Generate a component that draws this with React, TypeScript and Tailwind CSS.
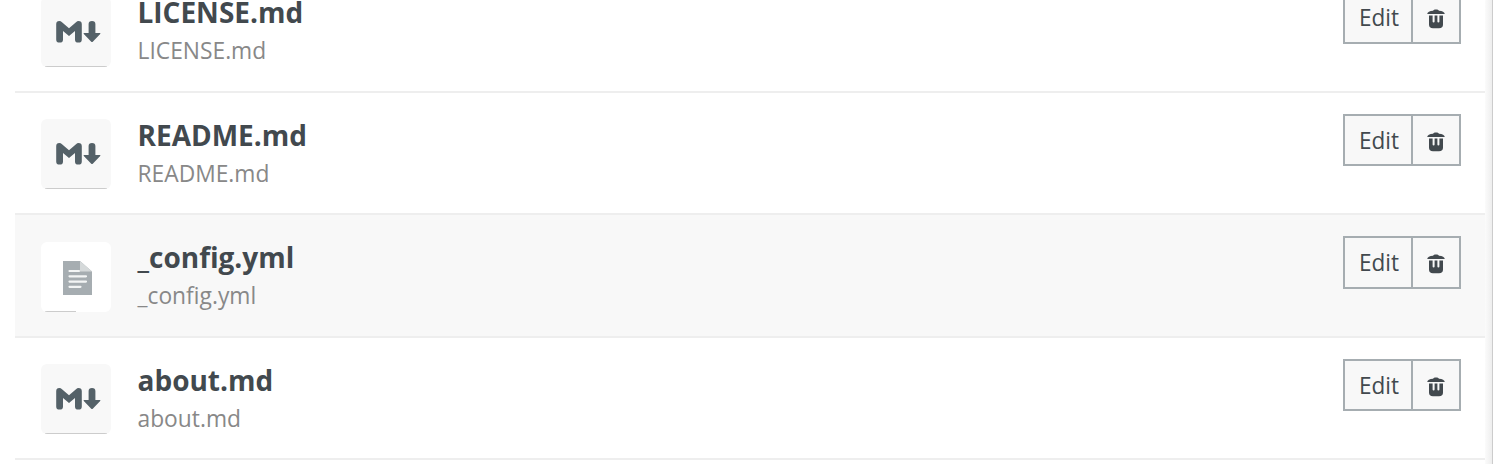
type Item = {
  name: string;
  kind: "md" | "file";
  row: string;
  button: string;
  label: string;
  icon: string;
  tile: string;
  title: string;
};

const items: Item[] = [
  { name: "LICENSE.md", kind: "md", row: "h-[122px]", button: "h-[52px]", label: "pb-0", icon: "pt-px", tile: "mt-[26px]", title: "mt-[22px]" },
  { name: "README.md", kind: "md", row: "h-[122px]", button: "h-[52px]", label: "pt-0.5", icon: "pt-[3px]", tile: "mt-[26px]", title: "mt-[23px]" },
  { name: "_config.yml", kind: "file", row: "h-[123px] bg-[#f8f8f8]", button: "h-[53px]", label: "pb-0", icon: "pt-0.5", tile: "mt-[27px]", title: "mt-[23px]" },
  { name: "about.md", kind: "md", row: "h-[122px]", button: "h-[52px]", label: "pt-0.5", icon: "pt-[3px]", tile: "mt-[26px]", title: "mt-[23px]" },
];

function MarkdownIcon() {
  return (
    <svg viewBox="0 0 70 70" className="size-[70px]" fill="#546168">
      <path d="M15.2 27.2Q15.2 24 18.3 24Q19.8 24 21 25.2L28 31.2L35 25.2Q36.2 24 37.5 24Q40.8 24 40.8 27.2V42.4Q40.8 45.6 37.4 45.6Q34 45.6 34 42.4V34L28 39L22 34V42.4Q22 45.6 18.6 45.6Q15.2 45.6 15.2 42.4Z" />
      <path d="M47.6 27Q47.6 24 51 24Q54.4 24 54.4 27V36H58.8Q60 36 59.2 37L52 44.6Q51 45.6 50 44.6L42.8 37Q42 36 43.2 36H47.6Z" />
    </svg>
  );
}

function FileIcon() {
  return (
    <svg viewBox="0 0 70 70" className="size-[70px]">
      <path d="M22 19H39L51 29.5V53H22Z" fill="#a6adb1" />
      <path d="M39 19L51 29.5H39Z" fill="#d5d9da" />
      <path d="M28.5 29H38M28.5 34.3H45M28.5 39.6H45M28.5 44.8H39.5" stroke="#f3f5f5" strokeWidth="2.2" strokeLinecap="round" />
    </svg>
  );
}

function TrashIcon() {
  return (
    <svg viewBox="0 0 18 20" className="h-5 w-[18px]" fill="#42494e">
      <path d="M0.2 5C0.5 3 2.5 2 6 1.8C6.5 0.9 7.5 0.6 9 0.6S11.5 0.9 12 1.8C15.5 2 17.5 3 17.8 5Z" />
      <path d="M2 6.6H5.6V12.6Q5.6 13.6 6.6 13.6T7.6 12.6V6.6H10.4V12.6Q10.4 13.6 11.4 13.6T12.4 12.6V6.6H16V15.5Q16 19.3 12 19.3H6Q2 19.3 2 15.5Z" />
    </svg>
  );
}

function FileRow({ item }: { item: Item }) {
  return (
    <li className={"flex shrink-0 items-start border-b-2 border-[#eeeeee] pr-6 pl-[26px] " + item.row}>
      <div className={"size-[70px] shrink-0 overflow-hidden rounded-[6px] " + item.tile + (item.kind === "md" ? " bg-[#f8f8f8]" : " bg-white")}>
        <div className="relative size-[70px]">
          {item.kind === "md" ? <MarkdownIcon /> : <FileIcon />}
          <span className={"absolute bottom-0 left-1 h-px bg-[#cccccc] " + (item.kind === "md" ? "w-[62px]" : "w-[31px]")} />
        </div>
      </div>
      <div className="ml-[26.5px] flex flex-1 flex-col">
        <div className={"origin-[0_30px] scale-y-[1.04] text-[28px] leading-[38px] font-bold text-[#42494e] " + item.title}>{item.name}</div>
        <div className="mt-[5px] origin-[0_24px] scale-y-[1.06] text-[22.8px] leading-[30px] text-[#888888]">{item.name}</div>
      </div>
      <div className={"mt-[21px] flex w-[118px] border-2 border-[#a6adb1] bg-[#f8f8f8] text-[#42494e] " + item.button}>
        <button className={"w-[68px] shrink-0 border-r-2 border-[#a6adb1] text-[22.5px] leading-[30px] " + item.label}>
          <span className="inline-block origin-[0_24px] translate-x-px scale-y-[1.06]">Edit</span>
        </button>
        <button className={"flex flex-1 items-center justify-center " + item.icon} aria-label="Delete">
          <TrashIcon />
        </button>
      </div>
    </li>
  );
}

export default function App() {
  return (
    <main className="flex h-[464px] overflow-hidden bg-white pl-[15px] font-['Open_Sans',sans-serif]">
      <ul className="-mt-[29px] flex w-[1470px] shrink-0 flex-col">
        {items.map((item) => (
          <FileRow key={item.name} item={item} />
        ))}
      </ul>
      <div className="h-full flex-1 bg-linear-to-r from-[#fbfbfb] to-[#eeeeee]" />
      <div className="h-full w-px bg-[#cccccc]" />
    </main>
  );
}
